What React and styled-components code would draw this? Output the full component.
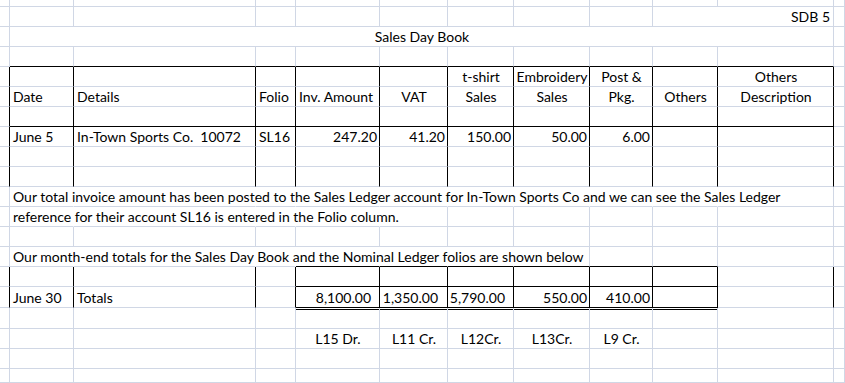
import React from 'react';
import styled, { createGlobalStyle, css } from 'styled-components';

const GRID = '#d0d7e5';
const INK = '#000';

const Global = createGlobalStyle`
  html, body { margin: 0; padding: 0; background: #fff; }
  body { font-family: Lato, "Liberation Sans", sans-serif; }
`;

const Sheet = styled.div`
  display: grid;
  grid-template-columns: 10px 64px 182px 40px 84px 68px 66px 76px 63px 65px 116px 1fr;
  grid-template-rows: 7px repeat(14, 20px) 21px 21px 20px 20px 1fr;
  width: 845px;
  height: 383px;
  overflow: hidden;
  background: #fff;
  font-family: Lato, "Liberation Sans", sans-serif;
  font-size: 14px;
  color: ${INK};
`;

const lineColor = (v) => (v === 'black' ? INK : v === 'none' ? 'transparent' : GRID);

const Cell = styled.div`
  grid-column: span ${(p) => p.$span || 1};
  position: relative;
  box-sizing: border-box;
  display: flex;
  align-items: flex-end;
  justify-content: ${(p) =>
    p.$align === 'right' ? 'flex-end' : p.$align === 'center' ? 'center' : 'flex-start'};
  padding: 0 ${(p) => (p.$pr ?? 2)}px 0 3px;
  border-right: 1px solid ${(p) => lineColor(p.$rb)};
  border-bottom: 1px solid ${(p) => lineColor(p.$bb)};
  white-space: pre;
  line-height: 18px;
  min-width: 0;
  ${(p) =>
    p.$double &&
    css`
      &::after {
        content: '';
        position: absolute;
        left: -1px;
        right: -1px;
        bottom: -3px;
        height: 1px;
        background: ${INK};
      }
    `}
`;

const c = (t) => ({ t, a: 'center' });
const r = (t, pr) => ({ t, a: 'right', pr });

const ROWS = [
  {},
  { 9: { t: 'SDB 5', a: 'right', span: 2, pr: 3 } },
  { 1: { t: 'Sales Day Book', a: 'center', span: 10 } },
  {},
  { 6: c('t-shirt'), 7: c('Embroidery'), 8: c('Post &'), 10: c('Others') },
  {
    1: 'Date', 2: 'Details', 3: 'Folio', 4: 'Inv. Amount', 5: c('VAT'), 6: c('Sales'),
    7: c('Sales'), 8: c('Pkg.'), 9: c('Others'), 10: c('Description'),
  },
  {},
  {
    1: 'June 5', 2: 'In-Town Sports Co.  10072', 3: 'SL16', 4: r('247.20'), 5: r('41.20'),
    6: r('150.00'), 7: r('50.00'), 8: r('6.00'),
  },
  {},
  {},
  {
    1: {
      t: 'Our total invoice amount has been posted to the Sales Ledger account for In-Town Sports Co and we can see the Sales Ledger',
      spill: 10,
    },
  },
  { 1: { t: 'reference for their account SL16 is entered in the Folio column.', spill: 5 } },
  {},
  { 1: { t: 'Our month-end totals for the Sales Day Book and the Nominal Ledger folios are shown below', spill: 7 } },
  {},
  {
    1: 'June 30', 2: 'Totals', 4: r('8,100.00', 8), 5: r('1,350.00', 9), 6: r('5,790.00', 8),
    7: r('550.00'), 8: r('410.00'),
  },
  {},
  { 4: c('L15 Dr.'), 5: c('L11 Cr.'), 6: c('L12Cr.'), 7: c('L13Cr.'), 8: c('L9 Cr.') },
  {},
  {},
];

const BOXED = new Set([4, 5, 6, 7, 8, 9, 14, 15]);

function bottomFor(row, col) {
  if ((row === 3 || row === 6) && col >= 1 && col <= 10) return 'black';
  if ((row === 13 || row === 14 || row === 15) && col >= 4 && col <= 9) return 'black';
  return 'grid';
}

function buildRow(spec, row) {
  const cells = [];
  let hideUntil = -1;
  let col = 0;
  while (col < 12) {
    let s = spec[col];
    if (typeof s === 'string') s = { t: s };
    s = s || {};
    const span = s.span || 1;
    const end = col + span - 1;
    if (s.spill) hideUntil = col + s.spill - 2;
    let rb = BOXED.has(row) && end <= 10 ? 'black' : 'grid';
    if (end <= hideUntil) rb = 'none';
    cells.push(
      <Cell
        key={`${row}-${col}`}
        $span={span}
        $align={s.a}
        $pr={s.pr}
        $rb={rb}
        $bb={bottomFor(row, col)}
        $double={row === 15 && col >= 4 && col <= 9}
      >
        {s.t || ''}
      </Cell>
    );
    col += span;
  }
  return cells;
}

export default function App() {
  return (
    <>
      <Global />
      <Sheet>{ROWS.map((spec, i) => buildRow(spec, i))}</Sheet>
    </>
  );
}
